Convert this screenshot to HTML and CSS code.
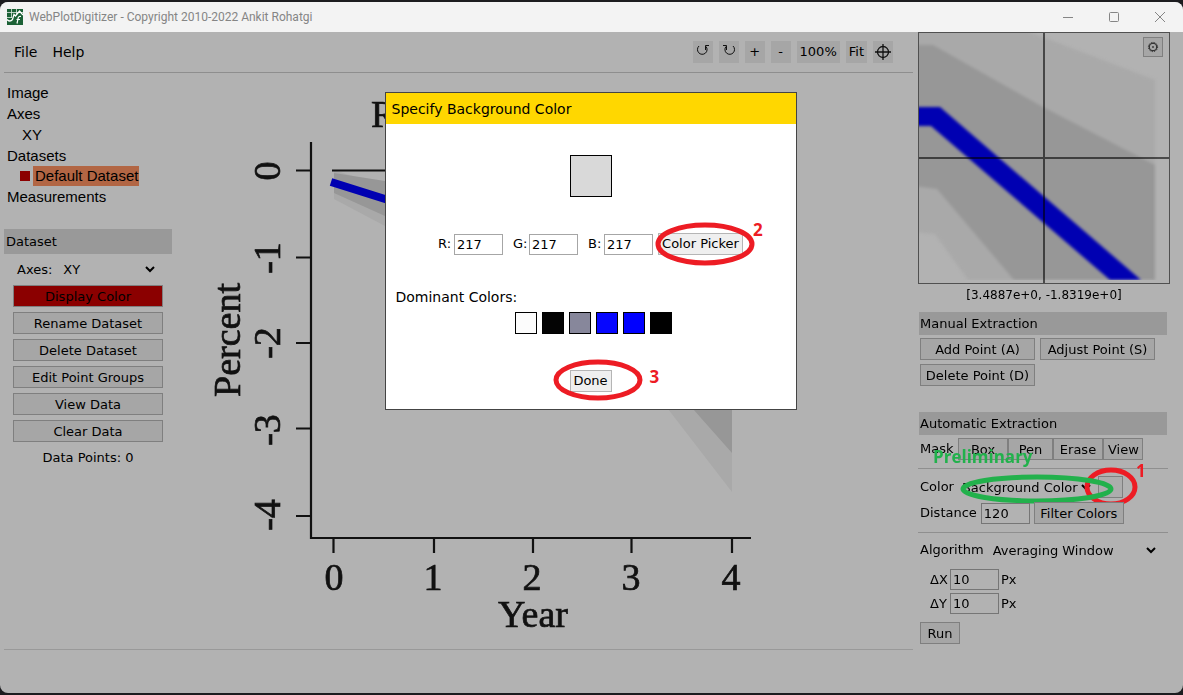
FILE: index.html
```html
<!DOCTYPE html>
<html lang="en">
<head>
<meta charset="utf-8">
<title>WebPlotDigitizer - Copyright 2010-2022 Ankit Rohatgi</title>
<link rel="stylesheet" href="styles.css">
</head>
<body>
<div class="window">
  <header class="titlebar">
    <svg class="app-icon" viewBox="0 0 16 16" width="16" height="16">
      <rect width="16" height="16" fill="#1b6136"/>
      <path d="M0 3.500H16M4.500 0V9M9.500 0V6M0 8.500H5" stroke="#dfe9e2" stroke-width=".8" fill="none"/>
      <path d="M0 10.500q3 3 5.500 0l1.500-5 1.500 1.500 4-5 3.500 4" stroke="#fff" stroke-width="1.300" fill="none"/>
      <path d="M14 7.500q-3-.5-3 2.500l-1 4.500M9.500 10.500h3.500" stroke="#fff" stroke-width="1.200" fill="none"/>
    </svg>
    <span class="window-title">WebPlotDigitizer - Copyright 2010-2022 Ankit Rohatgi</span>
    <div class="window-controls">
      <button class="window-button" aria-label="Minimize"><svg width="12" height="12" viewBox="0 0 12 12"><path d="M1 6.500H11"/></svg></button>
      <button class="window-button" aria-label="Maximize"><svg width="12" height="12" viewBox="0 0 12 12"><rect x="1.500" y="1.500" width="9" height="9" rx="1"/></svg></button>
      <button class="window-button" aria-label="Close"><svg width="12" height="12" viewBox="0 0 12 12"><path d="M1 1L11 11M11 1L1 11"/></svg></button>
    </div>
  </header>

  <div class="app">
    <div class="workspace">
      <div class="top-bar">
        <nav class="menu">
          <button class="menu-item">File</button>
          <button class="menu-item">Help</button>
        </nav>
        <div class="zoom-tools">
          <button class="tool" aria-label="Undo"><svg width="16" height="16" viewBox="0 0 16 16"><path d="M4 2A4.800 4.800 0 1 0 11 2.500M10.500 6V1.500H14"/></svg></button>
          <button class="tool" aria-label="Redo"><svg width="16" height="16" viewBox="0 0 16 16"><path d="M12 2A4.800 4.800 0 1 1 5 2.500M5.500 6V1.500H2"/></svg></button>
          <button class="tool">+</button>
          <button class="tool">-</button>
          <button class="tool">100%</button>
          <button class="tool">Fit</button>
          <button class="tool" aria-label="Crosshair"><svg width="16" height="16" viewBox="0 0 16 16"><circle cx="8" cy="8" r="5.500" stroke-width="1.300"/><path d="M8 0V16M0 8H16" stroke-width="1.300"/></svg></button>
        </div>
      </div>

      <div class="center">
        <aside class="left-panel">
          <ul class="tree">
            <li>Image</li>
            <li>Axes</li>
            <li class="tree-child">XY</li>
            <li>Datasets</li>
            <li class="tree-child tree-dataset"><span class="dataset-mark"></span><span class="selected">Default Dataset</span></li>
            <li>Measurements</li>
          </ul>
          <h2 class="panel-title">Dataset</h2>
          <div class="dataset-tools">
            <div class="axes-row"><label for="axes">Axes:</label><select id="axes" class="axes-select"><option>XY</option></select></div>
            <button class="button display-color">Display Color</button>
            <button class="button">Rename Dataset</button>
            <button class="button">Delete Dataset</button>
            <button class="button">Edit Point Groups</button>
            <button class="button">View Data</button>
            <button class="button">Clear Data</button>
            <p class="point-count">Data Points: 0</p>
          </div>
        </aside>

        <div class="graph">
          <svg class="plot" viewBox="180 73 733 576" width="733" height="576">
            <g class="soft">
              <path fill="#a9a9a9" d="M334 170L732 300V492L668 409L385 226L334 199Z"/>
              <path fill="#979797" d="M334 173L385 181L732 360V453L693 409L385 216L334 193Z"/>
              <path fill="none" stroke="#0000b2" stroke-width="8" d="M331 182L385 199L560 250"/>
              <g class="plot-lines">
                <path d="M311 142V538H751"/>
                <path d="M296 170.500H311M296 257.500H311M296 343H311M296 428.500H311M296 516H311M332 170.500H560"/>
                <path d="M333.500 538V553M434 538V553M533 538V553M631.500 538V553M732 538V553"/>
              </g>
              <g class="plot-text">
                <text class="plot-title" x="371" y="127">R</text>
                <text x="334" y="590">0</text>
                <text x="433" y="590">1</text>
                <text x="532" y="590">2</text>
                <text x="631" y="590">3</text>
                <text x="731" y="590">4</text>
                <text x="533" y="627">Year</text>
                <text transform="translate(280 171) rotate(-90)">0</text>
                <text transform="translate(280 258) rotate(-90)">-1</text>
                <text transform="translate(280 343) rotate(-90)">-2</text>
                <text transform="translate(280 430) rotate(-90)">-3</text>
                <text transform="translate(280 515) rotate(-90)">-4</text>
                <text transform="translate(240 340) rotate(-90)">Percent</text>
              </g>
            </g>
          </svg>
        </div>
      </div>
      <footer class="status"></footer>
    </div>

    <aside class="sidebar">
      <div class="magnifier">
        <svg width="250" height="250" viewBox="0 0 250 250">
          <g class="soft-wide">
            <path fill="#a9a9a9" d="M-5-5H100L236 47V247H49L16 201L-5 199Z"/>
            <path fill="#979797" d="M-5 12H14L124 74L236 132V247H95L18 156L-5 153Z"/>
            <path fill="#0000b2" d="M-5 74H21L222 247H191L12 93H-5Z"/>
          </g>
          <path fill="#b2b2b2" d="M0 247H250V250H0Z"/>
          <path stroke="#000" stroke-opacity=".58" stroke-width="2" d="M125 0V250M0 125H250"/>
        </svg>
        <button class="gear" aria-label="Magnifier settings"><svg width="12" height="12" viewBox="0 0 12 12"><circle cx="6" cy="6" r="3.800"/><circle cx="6" cy="6" r="4.600" stroke-dasharray="1.200 1.210"/><circle cx="6" cy="6" r=".5"/></svg></button>
      </div>
      <p class="coordinates">[3.4887e+0, -1.8319e+0]</p>

      <h2 class="panel-title">Manual Extraction</h2>
      <div class="manual-tools">
        <button class="button">Add Point (A)</button>
        <button class="button">Adjust Point (S)</button>
        <button class="button">Delete Point (D)</button>
      </div>

      <h2 class="panel-title">Automatic Extraction</h2>
      <div class="row mask-row">
        <span class="mask-label">Mask</span>
        <button class="button mask-box">Box</button><button class="button mask-pen">Pen</button><button class="button mask-erase">Erase</button><button class="button mask-view">View</button>
        <span class="note note-preliminary">Preliminary</span>
      </div>
      <hr class="rule">
      <div class="row color-row">
        <label for="color-mode">Color</label>
        <select id="color-mode" class="color-select"><option>Background Color</option></select>
        <button class="button color-swatch" aria-label="Pick color"></button>
        <svg class="mark mark-color" width="190" height="50" viewBox="0 0 190 50"><ellipse class="red" cx="152" cy="25" rx="24" ry="17"/><ellipse class="green" cx="78" cy="27" rx="74" ry="12"/></svg>
        <span class="note note-one">1</span>
      </div>
      <div class="row distance-row">
        <label for="distance">Distance</label>
        <input id="distance" class="field" value="120">
        <button class="button filter">Filter Colors</button>
      </div>
      <hr class="rule">
      <div class="row algorithm-row">
        <label for="algorithm">Algorithm</label>
        <select id="algorithm" class="algorithm-select"><option>Averaging Window</option></select>
      </div>
      <div class="delta-rows">
        <div class="delta"><label for="dx">ΔX</label><input id="dx" class="field" value="10"><span>Px</span></div>
        <div class="delta"><label for="dy">ΔY</label><input id="dy" class="field" value="10"><span>Px</span></div>
      </div>
      <button class="button run">Run</button>
    </aside>
  </div>
</div>

<section class="dialog" role="dialog" aria-labelledby="dialog-title">
  <h1 id="dialog-title" class="dialog-title">Specify Background Color</h1>
  <div class="dialog-body">
    <div class="preview"></div>
    <div class="rgb">
      <div class="channel"><label for="r">R:</label><input id="r" class="field" value="217"></div>
      <div class="channel"><label for="g">G:</label><input id="g" class="field" value="217"></div>
      <div class="channel"><label for="b">B:</label><input id="b" class="field" value="217"></div>
      <div class="marked">
        <button class="button picker">Color Picker</button>
        <svg class="mark mark-picker" width="102" height="46" viewBox="0 0 102 46"><ellipse class="red" cx="51" cy="23" rx="47" ry="19"/></svg>
        <span class="note note-two">2</span>
      </div>
    </div>
    <p class="dominant-label">Dominant Colors:</p>
    <div class="dominant">
      <button class="swatch swatch-white" aria-label="White"></button>
      <button class="swatch swatch-ink" aria-label="Near black"></button>
      <button class="swatch swatch-gray" aria-label="Gray"></button>
      <button class="swatch swatch-azure" aria-label="Light blue"></button>
      <button class="swatch swatch-blue" aria-label="Blue"></button>
      <button class="swatch swatch-black" aria-label="Black"></button>
    </div>
    <div class="marked">
      <button class="button done">Done</button>
      <svg class="mark mark-done" width="90" height="44" viewBox="0 0 90 44"><ellipse class="red" cx="45" cy="22" rx="42" ry="18"/></svg>
      <span class="note note-three">3</span>
    </div>
  </div>
</section>
</body>
</html>
```
FILE: styles.css
```css
* { box-sizing: border-box; }

html, body { height: 100%; }

body {
  margin: 0;
  padding: 2px 0;
  background: #1c1c1f;
  font: 13px/16px "DejaVu Sans", Verdana, sans-serif;
  color: #000;
}

button, input, select { font: inherit; color: inherit; margin: 0; }
h1, h2, p, ul { margin: 0; padding: 0; font-size: inherit; font-weight: normal; }
svg { display: block; flex: none; }

.window {
  display: flex;
  flex-direction: column;
  height: 100%;
  border-radius: 8px;
  overflow: hidden;
  background: #b2b2b2;
}

.titlebar {
  display: flex;
  align-items: center;
  height: 30px;
  flex: none;
  padding-left: 7px;
  background: #f3f3f3;
}
.window-title {
  flex: 1;
  padding-left: 6px;
  font: 12px/16px Roboto, "Open Sans", sans-serif;
  color: #858585;
}
.window-controls { display: flex; }
.window-button {
  display: grid;
  place-items: center;
  width: 46px;
  height: 30px;
  padding: 0;
  border: 0;
  background: none;
}
.window-button svg { fill: none; stroke: #858585; stroke-width: 1; }

.app { display: flex; flex: 1; min-height: 0; }

.workspace {
  display: flex;
  flex-direction: column;
  flex: 1;
  min-width: 0;
  padding-left: 4px;
}
.top-bar {
  display: flex;
  align-items: center;
  justify-content: space-between;
  height: 41px;
  flex: none;
  padding-right: 20px;
  border-bottom: 1px solid #8e8e8e;
}
.menu { display: flex; gap: 15px; padding-left: 10px; }
.menu-item { padding: 0; border: 0; background: none; font-size: 14px; }
.zoom-tools { display: flex; gap: 6px; }
.tool {
  display: grid;
  place-items: center;
  min-width: 20px;
  height: 22px;
  padding: 0 3px;
  border: 0;
  background: #a6a6a6;
}
.tool svg { margin: 0 -1px; fill: none; stroke: #111; stroke-width: 1; }

.center { display: flex; flex: 1; min-height: 0; }
.left-panel { width: 168px; flex: none; padding-top: 9px; }
.tree {
  list-style: none;
  padding-left: 3px;
  margin-bottom: 22px;
  font: 15px/21px "Liberation Sans", Arial, sans-serif;
}
.tree-child { padding-left: 15px; }
.tree-dataset { display: flex; align-items: center; padding-left: 13px; gap: 3px; }
.dataset-mark { width: 10px; height: 10px; background: #8b0000; }
.selected { padding: 0 1px 0 2px; line-height: 20px; background: #b26644; }

.panel-title { padding: 5px 2px 4px; background: #999; }

.dataset-tools {
  display: flex;
  flex-direction: column;
  gap: 5px;
  padding: 5px 9px;
}
.axes-row { display: flex; align-items: center; gap: 7px; height: 21px; padding: 0 5px 0 4px; }
select { border: 0; background: transparent; padding: 0; }
.axes-select { flex: 1; }

.button {
  height: 22px;
  padding: 1px 4px 0;
  border: 1px solid #7f7f7f;
  background: #a6a6a6;
  white-space: nowrap;
}
.display-color { background: #8b0000; }
.point-count { padding-top: 3px; text-align: center; }

.graph { flex: 1; min-width: 0; overflow: hidden; padding-left: 8px; }
.soft { filter: blur(.6px); }
.soft-wide { filter: blur(1.5px); }
.plot-lines { fill: none; stroke: #111; stroke-width: 2.2; }
.plot-text {
  font: 38px "Liberation Serif", "Times New Roman", serif;
  fill: #111;
  stroke: #111;
  stroke-width: .7;
  text-anchor: middle;
}
.plot-title { text-anchor: start; }

.status { height: 44px; flex: none; border-top: 1px solid #999; }

.sidebar { width: 252px; flex: none; margin: 0 13px 0 5px; }
.magnifier { position: relative; border: 1px solid #505050; overflow: hidden; }
.gear {
  position: absolute;
  top: 4px;
  right: 6px;
  display: grid;
  place-items: center;
  width: 20px;
  height: 20px;
  padding: 0;
  border: 1px solid #7f7f7f;
  background: #a6a6a6;
}
.gear svg { fill: none; stroke: #222; stroke-width: 1; }
.coordinates { padding: 3px 0 9px; text-align: center; font-size: 12px; }
.sidebar .panel-title { margin: 0 3px 0 1px; padding: 4px 1px 3px; }

.manual-tools {
  display: grid;
  grid-template-columns: 115px 115px;
  gap: 4px 5px;
  padding: 3px 2px 26px;
}

.row { position: relative; display: flex; align-items: center; height: 22px; padding-left: 2px; }
.mask-row { margin: 3px 0 8px; }
.mask-label { width: 38px; }
.mask-box { width: 50px; }
.mask-pen { width: 45px; }
.mask-erase { width: 50px; }
.mask-view { width: 40px; }
.rule { height: 1px; margin: 0 2px 0 0; border: 0; background: #8f8f8f; }

.color-row { margin-top: 7px; gap: 4px; }
.color-select { width: 136px; }
.color-swatch { width: 25px; background: #adadad; }
.distance-row { margin: 4px 0 8px; gap: 4px; }
.filter { width: 90px; }
.field {
  width: 49px;
  height: 21px;
  padding: 0 2px;
  border: 1px solid #767676;
  background: #b2b2b2;
}
.algorithm-row { margin-top: 6px; gap: 5px; }
.algorithm-select { width: 170px; }
.delta-rows { display: flex; flex-direction: column; gap: 3px; padding: 8px 12px; }
.delta { display: flex; align-items: center; }
.delta label { width: 20px; }
.delta span { padding-left: 2px; }
.run { width: 40px; margin-left: 2px; }

.dialog {
  position: absolute;
  top: 92px;
  left: 50%;
  width: 412px;
  margin-left: -207px;
  border: 1px solid #444;
  background: #fff;
}
.dialog-title { padding: 8px 6px 7px; background: #ffd700; font-size: 14px; }
.dialog-body { display: flex; flex-direction: column; align-items: center; padding: 31px 10px 17px; }
.dialog .field { border-color: #a6a6a6; background: #fff; }
.dialog .button { border-color: #b5b5b5; background: #efefef; }
.preview { width: 42px; height: 42px; border: 1px solid #000; background: #d9d9d9; }
.rgb { display: flex; align-items: center; margin: 36px 0 34px; }
.channel { display: flex; align-items: center; margin-right: 10px; }
.channel label { width: 16px; }
.channel:nth-child(3) { margin-right: 5px; }
.picker { width: 85px; padding: 0; }
.done { width: 42px; padding: 0; }
.marked { position: relative; }
.dominant-label { align-self: flex-start; font-size: 14px; }
.dominant { display: flex; gap: 5px; margin: 7px 0 36px; padding-left: 5px; }
.swatch { width: 22px; height: 22px; padding: 0; border: 1px solid #000; }
.swatch-white { background: #fcfcfc; }
.swatch-ink { background: #040404; }
.swatch-gray { background: #87879b; }
.swatch-azure { background: #0606ff; }
.swatch-blue { background: #00f; }
.swatch-black { background: #000; }

/* hand-drawn marks over the controls */
.mark { position: absolute; fill: none; pointer-events: none; }
.red { stroke: #ed1c24; stroke-width: 5; }
.green { stroke: #22b14c; stroke-width: 5; }
.mark-color { left: 41px; top: -14px; }
.mark-picker { left: -4px; top: -12px; }
.mark-done { left: -17px; top: -12px; }
.note {
  position: absolute;
  font: bold 17px/20px "Open Sans", "Noto Sans", sans-serif;
  color: #ed1c24;
}
.note-preliminary { left: 15px; top: 9px; color: #22b14c; }
.note-one { left: 218px; top: -15px; }
.note-two { left: 95px; top: -13px; }
.note-three { left: 80px; top: -3px; }
```
